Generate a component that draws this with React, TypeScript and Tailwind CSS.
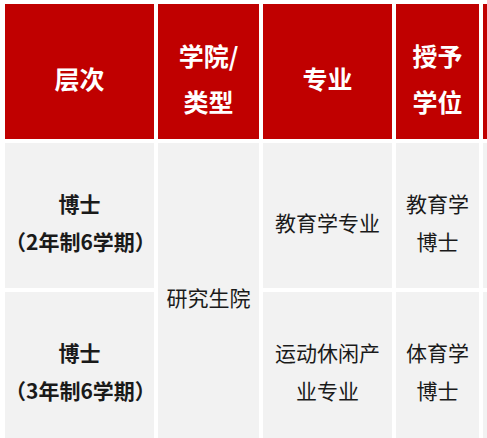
const font = { fontFamily: '"Microsoft YaHei", "Noto Sans CJK SC", sans-serif' };

const Head = ({ lines }: { lines: string[] }) => (
  <div className="flex flex-col items-center justify-center bg-[#c00000] pt-[12px] text-[25px] font-bold leading-[46px] text-white">
    {lines.map((l) => (
      <span key={l}>{l}</span>
    ))}
  </div>
);

const Cell = ({ lines, bold = false, className = '' }: { lines: string[]; bold?: boolean; className?: string }) => (
  <div
    className={`flex flex-col items-center justify-center bg-[#f2f2f2] pt-[12px] text-[21px] leading-[38px] text-[#1a1a1a] ${
      bold ? 'font-bold' : 'font-normal'
    } ${className}`}
  >
    {lines.map((l) => (
      <span key={l}>{l}</span>
    ))}
  </div>
);

export default function App() {
  return (
    <div className="h-[438px] w-[487px] overflow-hidden bg-white pl-[5px] pt-[4px]" style={font}>
      <div className="grid grid-cols-[149px_101px_129px_83px_60px] grid-rows-[135px_145px_146px] gap-[4px]">
        <Head lines={['层次']} />
        <Head lines={['学院/', '类型']} />
        <Head lines={['专业']} />
        <Head lines={['授予', '学位']} />
        <Head lines={['']} />

        <Cell lines={['博士', '（2年制6学期）']} bold />
        <Cell lines={['研究生院']} className="row-span-2" />
        <Cell lines={['教育学专业']} />
        <Cell lines={['教育学', '博士']} />
        <Cell lines={['']} />

        <Cell lines={['博士', '（3年制6学期）']} bold />
        <Cell lines={['运动休闲产', '业专业']} />
        <Cell lines={['体育学', '博士']} />
        <Cell lines={['']} />
      </div>
    </div>
  );
}
